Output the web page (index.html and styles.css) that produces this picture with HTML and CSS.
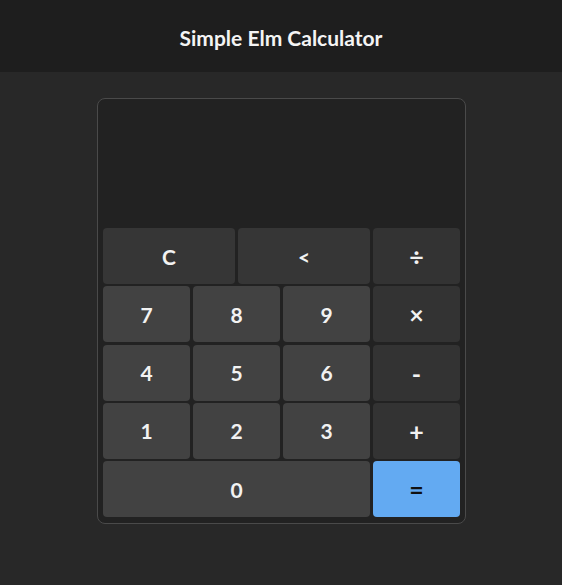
FILE: index.html
```html
<!DOCTYPE html>
<html>
<head>
<meta charset="utf-8">
<link rel="stylesheet" href="styles.css">
</head>
<body>
<header class="header">Simple Elm Calculator</header>
<main class="main">
  <div class="calc">
    <div class="display"></div>
    <div class="keys">
      <div class="row">
        <button class="key key-fn grow">C</button>
        <button class="key key-fn grow">&lt;</button>
        <button class="key key-op">÷</button>
      </div>
      <div class="row">
        <button class="key key-num">7</button>
        <button class="key key-num">8</button>
        <button class="key key-num">9</button>
        <button class="key key-op">×</button>
      </div>
      <div class="row">
        <button class="key key-num">4</button>
        <button class="key key-num">5</button>
        <button class="key key-num">6</button>
        <button class="key key-op">-</button>
      </div>
      <div class="row">
        <button class="key key-num">1</button>
        <button class="key key-num">2</button>
        <button class="key key-num">3</button>
        <button class="key key-op">+</button>
      </div>
      <div class="row">
        <button class="key key-num grow">0</button>
        <button class="key key-eq">=</button>
      </div>
    </div>
  </div>
</main>
</body>
</html>
```
FILE: styles.css
```css
html, body {
  margin: 0;
  padding: 0;
}
body {
  background: #282828;
  font-family: "Lato", sans-serif;
  color: #f2f2f2;
  min-height: 585px;
}
.header {
  height: 72px;
  background: #1e1e1e;
  display: flex;
  align-items: center;
  justify-content: center;
  padding-top: 3px;
  box-sizing: border-box;
  font-size: 21px;
  font-weight: bold;
  color: #f4f4f4;
}
.main {
  display: flex;
  justify-content: center;
  padding-top: 26px;
}
.calc {
  width: 357px;
  padding: 0 5px 6px 5px;
  border: 1px solid #4a4a4a;
  border-radius: 8px;
  background: #222222;
  margin-left: 1px;
}
.display {
  height: 129px;
}
.keys {
  display: flex;
  flex-direction: column;
  gap: 2.25px;
}
.row {
  display: flex;
  gap: 3px;
  height: 56px;
}
.key {
  width: 87px;
  flex: none;
  border: none;
  border-radius: 4px;
  font-family: "Lato", sans-serif;
  font-size: 21px;
  font-weight: bold;
  color: #f2f2f2;
  padding: 0;
  margin: 0;
}
.grow { flex: 1 1 0; width: auto; }
.key-num { background: #424242; }
.key-fn { background: #363636; }
.key-op { background: #333333; font-size: 25px; }
.key-eq { background: #63aaf2; color: #111111; font-size: 25px; }
```
